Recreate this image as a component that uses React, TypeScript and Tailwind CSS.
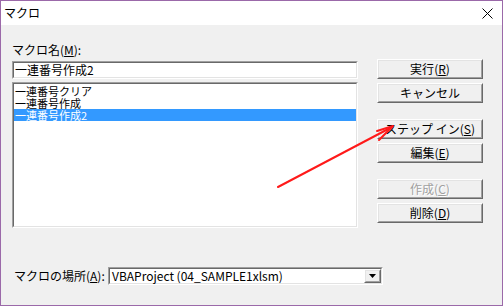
import type { ReactNode } from 'react';

const jp = { fontFamily: '"Noto Sans CJK JP", "Liberation Sans", sans-serif' };

function Sunken({ className, children }: { className?: string; children?: ReactNode }) {
  return (
    <div className={`border border-t-[#a0a0a0] border-l-[#a0a0a0] border-b-white border-r-white ${className ?? ''}`}>
      <div className="h-full border border-t-[#696969] border-l-[#696969] border-b-[#e3e3e3] border-r-[#e3e3e3] bg-white">
        {children}
      </div>
    </div>
  );
}

function Raised({ className, children }: { className?: string; children?: ReactNode }) {
  return (
    <div className={`border border-t-white border-l-white border-b-[#696969] border-r-[#696969] ${className ?? ''}`}>
      <div className="h-full border border-t-[#e3e3e3] border-l-[#e3e3e3] border-b-[#a0a0a0] border-r-[#a0a0a0] bg-[#f0f0f0] flex items-center justify-center">
        {children}
      </div>
    </div>
  );
}

function Btn({ label, key1, disabled }: { label: string; key1?: string; disabled?: boolean }) {
  return (
    <Raised className="h-[20px] w-[106px]">
      <span
        className={`text-[12px] leading-[12px] ${disabled ? 'text-[#a0a0a0] [text-shadow:1px_1px_0_#fff]' : 'text-black'}`}
      >
        {label}
        {key1 && (
          <>
            (<u className="underline-offset-1">{key1}</u>)
          </>
        )}
      </span>
    </Raised>
  );
}

const macros = ['一連番号クリア', '一連番号作成', '一連番号作成2'];

export default function App() {
  return (
    <div
      className="relative w-[503px] h-[306px] border border-[#9b69a9] bg-[#f0f0f0] flex flex-col overflow-hidden"
      style={jp}
    >
      {/* タイトルバー */}
      <div className="h-[24px] bg-white flex items-center justify-between pl-[3px] pr-[9px]">
        <span className="text-[12px] leading-[12px] text-black">マクロ</span>
        <svg width="11" height="11" viewBox="0 0 11 11">
          <path d="M0.5 0.5 L10.5 10.5 M10.5 0.5 L0.5 10.5" stroke="#000" strokeWidth="1" fill="none" />
        </svg>
      </div>

      {/* 本体 */}
      <div className="flex-1 flex flex-col">
        <div className="flex">
          <div className="ml-[11px] pt-[18px] w-[346px] flex flex-col">
            <div className="h-[14px] text-[12px] leading-[14px] text-black">
              マクロ名(<u className="underline-offset-1">M</u>):
            </div>
            <Sunken className="mt-[4px] h-[18px]">
              <div className="pl-[1px] text-[12px] leading-[14px] text-black">一連番号作成2</div>
            </Sunken>
            <Sunken className="mt-[3px] h-[146px]">
              <div className="pt-[1px]">
                {macros.map((m, i) => (
                  <div
                    key={m}
                    className={`h-[12px] text-[11px] leading-[12px] pl-[1px] ${
                      i === 2 ? 'bg-[#3399ff] text-white' : 'text-black'
                    }`}
                  >
                    {m}
                  </div>
                ))}
              </div>
            </Sunken>
          </div>

          <div className="ml-[19px] pt-[34px] flex flex-col">
            <Btn label="実行" key1="R" />
            <div className="mt-[4px]">
              <Btn label="キャンセル" />
            </div>
            <div className="mt-[16px]">
              <Btn label="ステップ イン" key1="S" />
            </div>
            <div className="mt-[4px]">
              <Btn label="編集" key1="E" />
            </div>
            <div className="mt-[16px]">
              <Btn label="作成" key1="C" disabled />
            </div>
            <div className="mt-[4px]">
              <Btn label="削除" key1="D" />
            </div>
          </div>
        </div>

        <div className="mt-[39px] ml-[13px] flex items-center">
          <span className="w-[94px] text-[12px] leading-[12px] text-black">
            マクロの場所(<u className="underline-offset-1">A</u>):
          </span>
          <Sunken className="w-[275px] h-[18px]">
            <div className="h-full flex items-center justify-between">
              <span className="pl-[2px] text-[12px] leading-[12px] text-black">VBAProject (04_SAMPLE1xlsm)</span>
              <Raised className="w-[17px] h-[14px]">
                <svg width="7" height="4" viewBox="0 0 7 4">
                  <path d="M0 0 H7 L3.5 4 Z" fill="#000" />
                </svg>
              </Raised>
            </div>
          </Sunken>
        </div>
      </div>

      {/* 注釈の赤い矢印 */}
      <svg className="absolute left-0 top-0 pointer-events-none" width="503" height="306" viewBox="0 0 503 306">
        <g stroke="#ff1a1a" strokeWidth="2" fill="none" strokeLinecap="round" strokeLinejoin="round">
          <path d="M277 186 L391 126" />
          <path d="M376 130 L392 125 L378 139" />
        </g>
      </svg>
    </div>
  );
}
